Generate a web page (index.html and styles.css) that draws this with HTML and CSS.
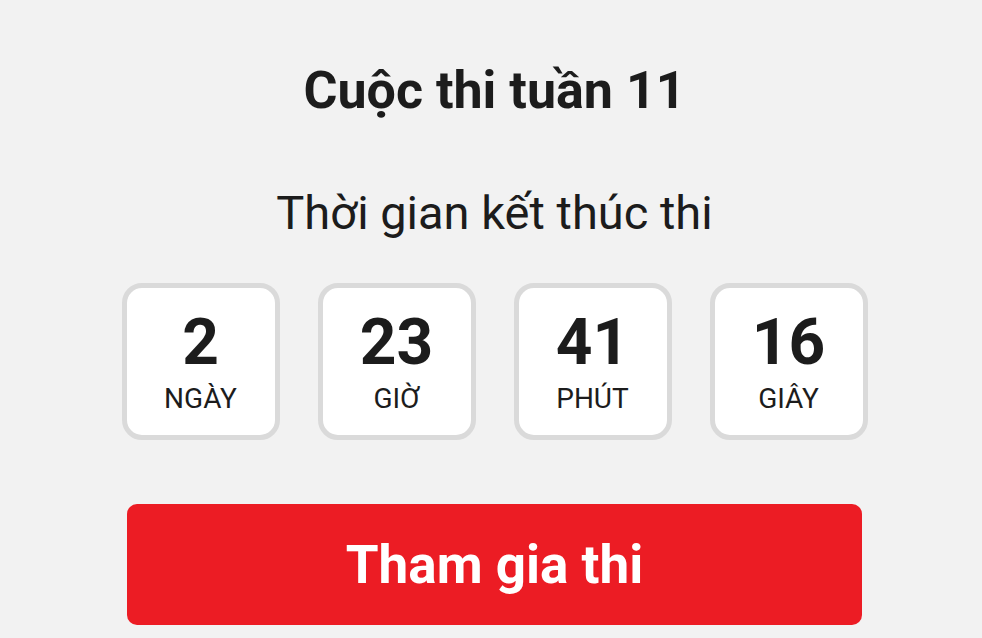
FILE: index.html
```html
<!DOCTYPE html>
<html lang="vi">
<head>
    <meta charset="UTF-8">
    <title>Cuộc thi tuần 11</title>
    <link rel="stylesheet" href="styles.css">
</head>
<body>
    <main class="contest">
        <h1 class="contest-title">Cuộc thi tuần 11</h1>
        <p class="contest-sub">Thời gian kết thúc thi</p>

        <div class="countdown">
            <div class="count-box">
                <span class="count-num">2</span>
                <span class="count-label">NGÀY</span>
            </div>
            <div class="count-box">
                <span class="count-num">23</span>
                <span class="count-label">GIỜ</span>
            </div>
            <div class="count-box">
                <span class="count-num">41</span>
                <span class="count-label">PHÚT</span>
            </div>
            <div class="count-box">
                <span class="count-num">16</span>
                <span class="count-label">GIÂY</span>
            </div>
        </div>

        <button class="join-btn" type="button">Tham gia thi</button>
    </main>
</body>
</html>
```

FILE: styles.css
```css
:root {
    --page-bg: #f2f2f2;
    --ink: #1c1c1c;
    --box-border: #dadada;
    --brand-red: #ec1c24;
}

* {
    margin: 0;
    padding: 0;
    box-sizing: border-box;
}

body {
    background: var(--page-bg);
    font-family: Roboto, 'Noto Sans', Arial, sans-serif;
    color: var(--ink);
    overflow: hidden;
}

.contest {
    width: 743px;
    margin-left: 123px;
    display: flex;
    flex-direction: column;
    align-items: center;
}

/* tiêu đề */
.contest-title {
    font-size: 52px;
    font-weight: 700;
    line-height: 60px;
    margin-top: 61px;
}

.contest-sub {
    font-size: 47px;
    font-weight: 400;
    line-height: 54px;
    margin-top: 65px;
}

/* bộ đếm ngược */
.countdown {
    display: flex;
    gap: 38px;
    margin-top: 43px;
}

.count-box {
    width: 158px;
    height: 157px;
    background: #fff;
    border: 5px solid var(--box-border);
    border-radius: 20px;
    display: flex;
    flex-direction: column;
    align-items: center;
    padding-top: 19px;
}

.count-num {
    font-size: 64px;
    font-weight: 700;
    line-height: 72px;
}

.count-label {
    font-size: 28px;
    line-height: 32px;
    margin-top: 4px;
}

/* nút tham gia */
.join-btn {
    width: 735px;
    height: 121px;
    margin-top: 64px;
    background: var(--brand-red);
    color: #fff;
    border: none;
    border-radius: 10px;
    font-family: inherit;
    font-size: 53px;
    font-weight: 700;
    cursor: pointer;
}
```
